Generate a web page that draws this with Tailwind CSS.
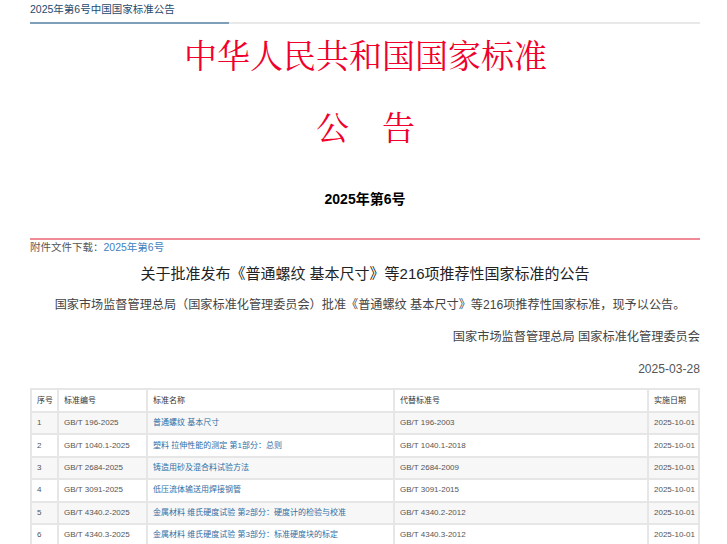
<!DOCTYPE html>
<html lang="zh-CN">
<head>
    <meta charset="UTF-8">
    <script src="https://cdn.jsdelivr.net/npm/@tailwindcss/browser@4"></script>
    <title>2025年第6号中国国家标准公告</title>
</head>
<body class="bg-white overflow-hidden font-['Liberation_Sans','Noto_Sans_CJK_SC',sans-serif]">
    <div class="w-[670px] ml-[30px] h-[544px] overflow-hidden">
        <!-- breadcrumb -->
        <div class="h-[24px] border-b-2 border-[#e8e8e8] relative">
            <p class="text-[10.5px] leading-[18px] text-[#1f4a6b]">2025年第6号中国国家标准公告</p>
            <div class="absolute left-0 bottom-[-2px] w-[199px] h-[2px] bg-[#7f9fb8]"></div>
        </div>

        <!-- heading -->
        <h1 class="mt-[8px] pl-px text-center text-[33px] leading-[44px] text-[#f0002a] font-['Noto_Serif_CJK_SC','Liberation_Serif','Noto_Sans_CJK_SC',serif]">中华人民共和国国家标准</h1>
        <h2 class="mt-[28px] pl-px text-center text-[33px] leading-[44px] text-[#f0002a] font-['Noto_Serif_CJK_SC','Liberation_Serif','Noto_Sans_CJK_SC',serif]">公&emsp;告</h2>
        <p class="mt-[41px] text-center text-[14px] leading-[20px] font-bold text-black">2025年第6号</p>
        <div class="mt-[29px] h-[2px] bg-[#f08a96]"></div>

        <p class="text-[10.5px] leading-[14px] text-[#555]">附件文件下载：<a class="text-[#3f7fc1]">2025年第6号</a></p>
        <h3 class="mt-[10px] text-center text-[15px] leading-[20px] text-[#222]">关于批准发布《普通螺纹 基本尺寸》等216项推荐性国家标准的公告</h3>
        <p class="mt-[11px] pl-[10px] text-center text-[12.15px] leading-[20px] text-[#444]">国家市场监督管理总局（国家标准化管理委员会）批准《普通螺纹 基本尺寸》等216项推荐性国家标准，现予以公告。</p>
        <p class="mt-[12px] text-right text-[12.2px] leading-[20px] text-[#444]">国家市场监督管理总局 国家标准化管理委员会</p>
        <p class="mt-[12px] text-right text-[12.1px] leading-[20px] text-[#555]">2025-03-28</p>

        <!-- standards table -->
        <table class="mt-[9px] w-[668px] table-fixed border-collapse text-[8px] whitespace-nowrap text-[#555]">
            <colgroup>
                <col class="w-[27px]">
                <col class="w-[89px]">
                <col class="w-[247px]">
                <col class="w-[254px]">
                <col class="w-[51px]">
            </colgroup>
            <thead class="text-[#333]">
                <tr class="h-[23px]">
                    <th class="border-2 border-[#e6e6e6] px-[5px] text-left font-normal">序号</th>
                    <th class="border-2 border-[#e6e6e6] px-[5px] text-left font-normal">标准编号</th>
                    <th class="border-2 border-[#e6e6e6] px-[5px] text-left font-normal">标准名称</th>
                    <th class="border-2 border-[#e6e6e6] px-[5px] text-left font-normal">代替标准号</th>
                    <th class="border-2 border-[#e6e6e6] px-[5px] text-left font-normal">实施日期</th>
                </tr>
            </thead>
            <tbody>
                <tr class="h-[22.4px] bg-[#f7f7f7]">
                    <td class="border-2 border-[#e6e6e6] px-[5px]">1</td>
                    <td class="border-2 border-[#e6e6e6] px-[5px]">GB/T 196-2025</td>
                    <td class="border-2 border-[#e6e6e6] px-[5px] text-[#2f6ea5]">普通螺纹 基本尺寸</td>
                    <td class="border-2 border-[#e6e6e6] px-[5px]">GB/T 196-2003</td>
                    <td class="border-2 border-[#e6e6e6] px-[5px]">2025-10-01</td>
                </tr>
                <tr class="h-[22.4px]">
                    <td class="border-2 border-[#e6e6e6] px-[5px]">2</td>
                    <td class="border-2 border-[#e6e6e6] px-[5px]">GB/T 1040.1-2025</td>
                    <td class="border-2 border-[#e6e6e6] px-[5px] text-[#2f6ea5]">塑料 拉伸性能的测定 第1部分：总则</td>
                    <td class="border-2 border-[#e6e6e6] px-[5px]">GB/T 1040.1-2018</td>
                    <td class="border-2 border-[#e6e6e6] px-[5px]">2025-10-01</td>
                </tr>
                <tr class="h-[22.4px] bg-[#f7f7f7]">
                    <td class="border-2 border-[#e6e6e6] px-[5px]">3</td>
                    <td class="border-2 border-[#e6e6e6] px-[5px]">GB/T 2684-2025</td>
                    <td class="border-2 border-[#e6e6e6] px-[5px] text-[#2f6ea5]">铸造用砂及混合料试验方法</td>
                    <td class="border-2 border-[#e6e6e6] px-[5px]">GB/T 2684-2009</td>
                    <td class="border-2 border-[#e6e6e6] px-[5px]">2025-10-01</td>
                </tr>
                <tr class="h-[22.4px]">
                    <td class="border-2 border-[#e6e6e6] px-[5px]">4</td>
                    <td class="border-2 border-[#e6e6e6] px-[5px]">GB/T 3091-2025</td>
                    <td class="border-2 border-[#e6e6e6] px-[5px] text-[#2f6ea5]">低压流体输送用焊接钢管</td>
                    <td class="border-2 border-[#e6e6e6] px-[5px]">GB/T 3091-2015</td>
                    <td class="border-2 border-[#e6e6e6] px-[5px]">2025-10-01</td>
                </tr>
                <tr class="h-[22.4px] bg-[#f7f7f7]">
                    <td class="border-2 border-[#e6e6e6] px-[5px]">5</td>
                    <td class="border-2 border-[#e6e6e6] px-[5px]">GB/T 4340.2-2025</td>
                    <td class="border-2 border-[#e6e6e6] px-[5px] text-[#2f6ea5]">金属材料 维氏硬度试验 第2部分：硬度计的检验与校准</td>
                    <td class="border-2 border-[#e6e6e6] px-[5px]">GB/T 4340.2-2012</td>
                    <td class="border-2 border-[#e6e6e6] px-[5px]">2025-10-01</td>
                </tr>
                <tr class="h-[22.4px]">
                    <td class="border-2 border-[#e6e6e6] px-[5px]">6</td>
                    <td class="border-2 border-[#e6e6e6] px-[5px]">GB/T 4340.3-2025</td>
                    <td class="border-2 border-[#e6e6e6] px-[5px] text-[#2f6ea5]">金属材料 维氏硬度试验 第3部分：标准硬度块的标定</td>
                    <td class="border-2 border-[#e6e6e6] px-[5px]">GB/T 4340.3-2012</td>
                    <td class="border-2 border-[#e6e6e6] px-[5px]">2025-10-01</td>
                </tr>
            </tbody>
        </table>
    </div>
</body>
</html>
